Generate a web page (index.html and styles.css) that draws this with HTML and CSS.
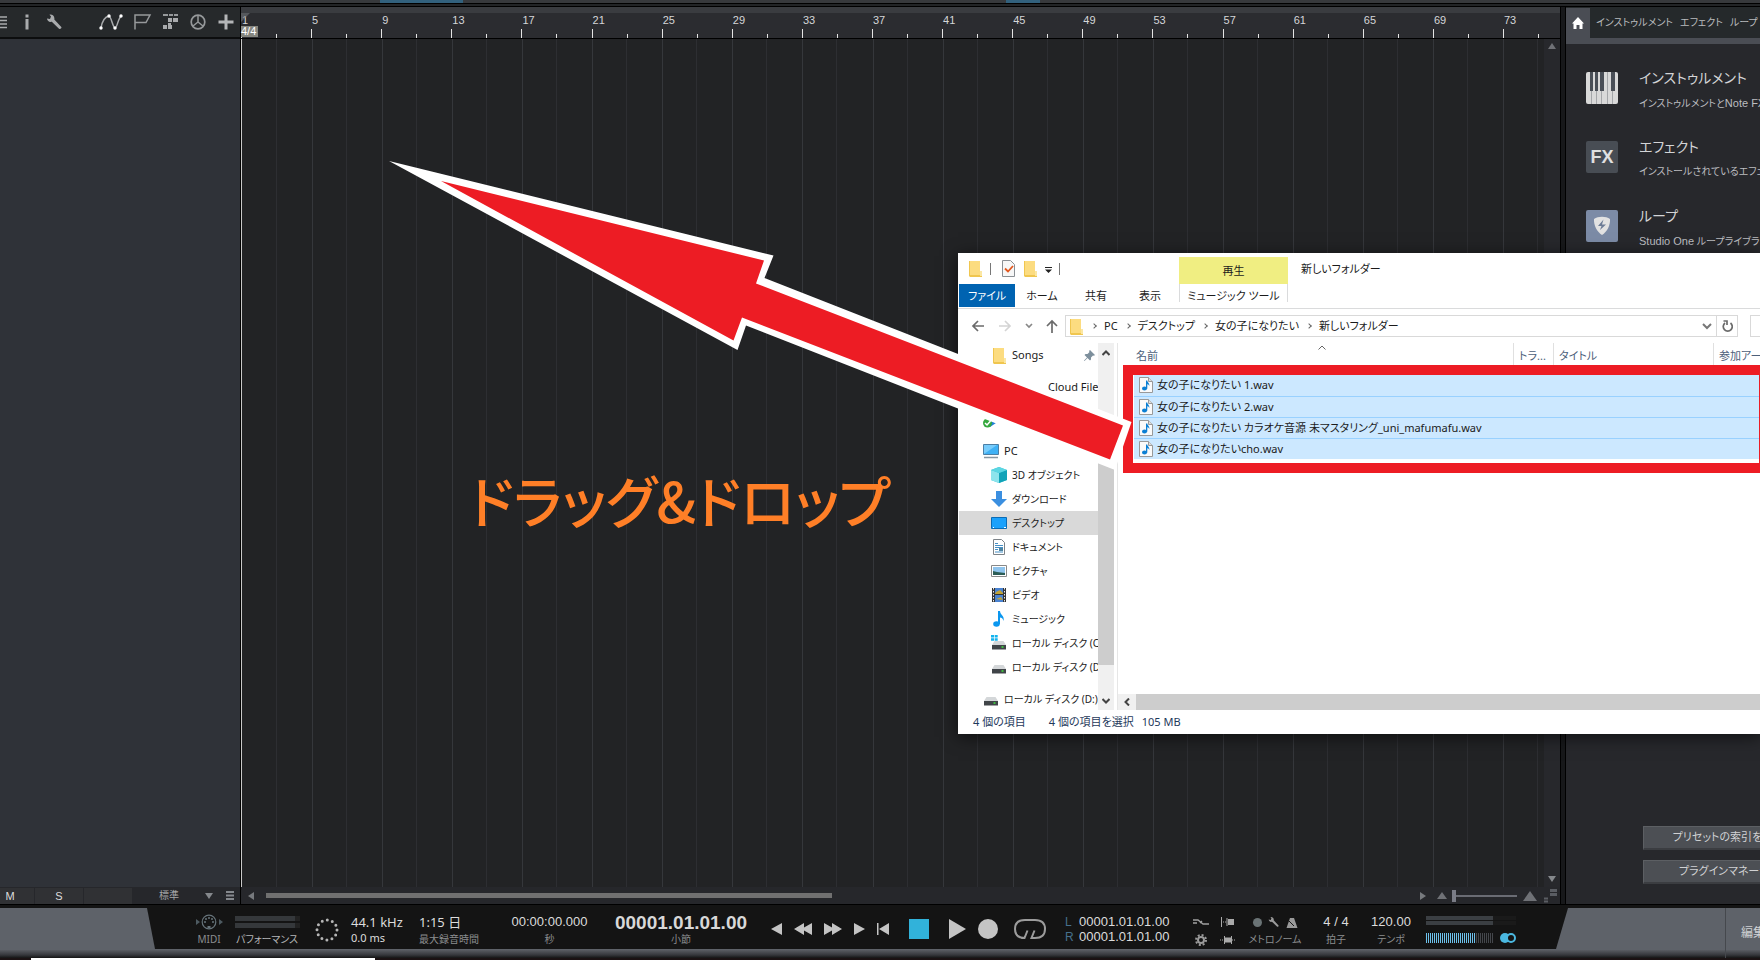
FILE: index.html
```html
<!DOCTYPE html>
<html lang="ja">
<head>
<meta charset="utf-8">
<title>Studio One</title>
<link rel="stylesheet" href="styles.css">
</head>
<body>
<svg class="defs" aria-hidden="true">
  <symbol id="folder" viewBox="0 0 14 17"><path d="M0 1h11v12h2v4H1l-1-1z" fill="#f0c64f"/><path d="M1 1h10v14H1z" fill="#fcdc80"/><path d="M11 11h2v5h-2z" fill="#fbe7a4"/></symbol>
  <symbol id="wav" viewBox="0 0 14 16"><path d="M.5.5h9l4 4v11H.5z" fill="#fafafa" stroke="#999"/><path d="M9.500.5v4h4" fill="#ddd" stroke="#999"/><ellipse cx="5.500" cy="11.500" rx="2.500" ry="2" fill="#0a7fd4"/><path d="M7 3.500h1.300c0 2 2.600 2.500 2 5.500-.5-1.500-1.500-1.800-2-1.800v4.500H7z" fill="#0a7fd4"/></symbol>
  <symbol id="drive" viewBox="0 0 16 16"><path d="M3.500 6h9l2.500 4H1z" fill="#d4d7d9"/><path d="M1 10h14v4.500H1z" fill="#404448"/><path d="M10.500 12h2" stroke="#3fe23f" stroke-width="1.500"/></symbol>
  <symbol id="wrench" viewBox="0 0 16 16"><path d="M1 4.500 4 5l1-2.500L3.500.7C6 0 9 2 8.300 5.500l7 7.500c.8 1.200-1.300 2.800-2.300 1.700L5.800 7.800C3 8.500 1 6.500 1 4.500z" fill="currentColor"/></symbol>
</svg>

<div class="app">
  <div class="topstrip"></div>
  <main class="workspace">
    <section class="tracks">
      <div class="toolbar">
        <button aria-label="リスト" class="t-list"><svg width="8" height="14" viewBox="0 0 8 14"><path d="M0 2h7M0 5.500h7M0 9h7M0 12.500h7" stroke="#a9abad" stroke-width="1.500"/></svg></button>
        <button aria-label="情報" class="t-info"><svg width="4" height="16" viewBox="0 0 4 16"><path d="M.5.5h3v3h-3zM.5 5h3v10.500h-3z" fill="#a9abad"/></svg></button>
        <button aria-label="ツール" class="t-tool"><svg width="16" height="16"><use href="#wrench"/></svg></button>
        <button aria-label="オートメーション" class="t-auto"><svg width="24" height="18" viewBox="0 0 24 18"><path d="M2 15C3 9 5 4 10 3c2 0 4 12 6 12s3-9 6-12" fill="none" stroke="#a9abad" stroke-width="1.500"/><g fill="#fff"><circle cx="2" cy="15" r="1.700"/><circle cx="10" cy="3" r="1.700"/><circle cx="16" cy="15" r="1.700"/><circle cx="22" cy="3" r="1.700"/></g></svg></button>
        <button aria-label="マーカー" class="t-flag"><svg width="18" height="16" viewBox="0 0 18 16"><path d="M1 15.500V1h15l-4 7.500H1" fill="none" stroke="#96999b" stroke-width="1.500"/></svg></button>
        <button aria-label="アレンジ" class="t-arr"><svg width="16" height="16" viewBox="0 0 16 16"><path d="M0 1h5M6 1h4M11 1h4" stroke="#96999b" stroke-width="2"/><path d="M5 4h4v4H5zM10 4h5v4h-5zM5 9h3v3H5zM0 11h4v4H0zM5 11h4v4H5z" fill="#a9abad"/></svg></button>
        <button aria-label="テンポ" class="t-tempo"><svg width="16" height="16" viewBox="0 0 16 16"><circle cx="8" cy="8" r="6.800" fill="none" stroke="#96999b" stroke-width="1.700"/><path d="M8 1v7M8 8l5 4M8 8l-5 4" stroke="#96999b" stroke-width="1.500"/></svg></button>
        <button aria-label="追加" class="t-add"><svg width="16" height="16" viewBox="0 0 16 16"><path d="M8 .5v15M.5 8h15" stroke="#b4b6b8" stroke-width="3"/></svg></button>
      </div>
      <div class="tracklist"></div>
      <div class="trackfoot">
        <button>M</button><button>S</button><span class="cell"></span>
        <button class="size">標準<i class="tri down"></i></button>
        <svg class="lines" width="8" height="9" viewBox="0 0 8 9"><path d="M0 1h8M0 4.500h8M0 8h8" stroke="#85888d" stroke-width="2"/></svg>
      </div>
    </section>

    <section class="arrange">
      <div class="ruler">
        <span>1</span><span>5</span><span>9</span><span>13</span><span>17</span><span>21</span><span>25</span><span>29</span><span>33</span><span>37</span><span>41</span><span>45</span><span>49</span><span>53</span><span>57</span><span>61</span><span>65</span><span>69</span><span>73</span>
        <svg class="playhead" width="9" height="9" viewBox="0 0 9 9"><path d="M0 0h9L0 9z" fill="#74777c"/></svg>
        <b class="meter-sig">4/4</b>
      </div>
      <div class="lanes">
        <div class="grid"><i></i><i></i><i></i><i></i><i></i><i></i><i></i><i></i><i></i><i></i><i></i><i></i><i></i><i></i><i></i><i></i><i></i><i></i><i></i></div>
        <div class="vscroll"><i class="tri up"></i><i class="tri down"></i></div>
      </div>
      <div class="hscroll">
        <i class="tri left"></i>
        <div class="rail"><div class="thumb"></div></div>
        <i class="tri right"></i>
        <i class="tri up zoomout"></i>
        <input type="range" aria-label="ズーム" min="0" max="100" value="0">
        <i class="tri up big"></i>
        <svg width="14" height="14" viewBox="0 0 14 14"><path d="M6 1.500h7M6 5.500h7" stroke="#5a5d63" stroke-width="3"/><path d="M0 9.500h4M0 12.500h4" stroke="#5a5d63" stroke-width="2"/></svg>
      </div>
    </section>

    <aside class="browser">
      <nav class="tabs">
        <button class="home" aria-label="ホーム"><svg width="12" height="12" viewBox="0 0 12 12"><path d="M6 0l6 6.500h-1.500V12h-3V8h-3v4h-3V6.500H0z" fill="#fff"/></svg></button>
        <button>インストゥルメント</button><button>エフェクト</button><button>ループ</button>
      </nav>
      <ul class="cats">
        <li>
          <svg width="32" height="32" viewBox="0 0 32 32"><rect width="32" height="32" rx="2" fill="#d9d9d9"/><path d="M5.500 19v13M10.500 19v13M15.500 19v13M21.500 0v32M26.500 19v13" stroke="#a4a6a9"/><path d="M4 0h3v19H4zM9 0h3v19H9zM14 0h4v19h-4zM25 0h4v19h-4z" fill="#4a4f57"/></svg>
          <div><h3>インストゥルメント</h3><p>インストゥルメントと<span>Note FX</span>を</p></div>
        </li>
        <li>
          <span class="fx">FX</span>
          <div><h3>エフェクト</h3><p>インストールされているエフェクト</p></div>
        </li>
        <li>
          <svg width="32" height="32" viewBox="0 0 32 32"><rect width="32" height="32" rx="2" fill="#7c8ba6"/><path d="M8 9c4-3 12-3 16 0 .5 6-3 13-8 16C11 22 7.500 15 8 9z" fill="#e2e2e2"/><path d="M17.500 9.500 12 16h3.500l-1.500 4 6-5.500h-4z" fill="#6d7c96"/></svg>
          <div><h3>ループ</h3><p><span>Studio One</span> ループライブラリ</p></div>
        </li>
      </ul>
      <div class="actions">
        <button>プリセットの索引を再作成</button>
        <button>プラグインマネージャー</button>
      </div>
    </aside>
  </main>

  <footer class="dock">
    <div class="transport">
      <div class="g"><svg width="28" height="16" viewBox="0 0 28 16"><circle cx="14" cy="8" r="6.800" fill="none" stroke="#66737a" stroke-width="1.200"/><g fill="#66737a"><circle cx="10" cy="8" r="1"/><circle cx="18" cy="8" r="1"/><circle cx="11" cy="5" r="1"/><circle cx="17" cy="5" r="1"/><circle cx="14" cy="4" r="1"/><rect x="12.500" y="12" width="3" height="2"/></g><path d="M1 5l4 3-4 3zM24 5l4 3-4 3z" fill="#4d5a61"/></svg><small>MIDI</small></div>
      <div class="g"><div class="perf"><i></i><i></i></div><small class="lit">パフォーマンス</small></div>
      <div class="g spin"><svg width="24" height="24" viewBox="0 0 24 24"><circle cx="12" cy="12" r="10" fill="none" stroke="#b5b5b5" stroke-width="3" stroke-linecap="round" stroke-dasharray="0 5.236"/></svg></div>
      <div class="g l"><span class="seg">44.1 kHz</span><span class="seg2">0.0 ms</span></div>
      <div class="g l"><span class="seg">1:15 日</span><small>最大録音時間</small></div>
      <div class="g"><span class="num">00:00:00.000</span><small>秒</small></div>
      <div class="g"><span class="bignum">00001.01.01.00</span><small>小節</small></div>
      <div class="keys">
        <button aria-label="前へ"><svg width="11" height="12" viewBox="0 0 11 12"><path d="M11 0v12L0 6z"/></svg></button>
        <button aria-label="巻き戻し"><svg width="18" height="12" viewBox="0 0 18 12"><path d="M10 0v4.500L18 0v12l-8-4.500V12L0 6z"/></svg></button>
        <button aria-label="早送り"><svg width="18" height="12" viewBox="0 0 18 12"><path d="M8 0v4.500L0 0v12l8-4.500V12l10-6z"/></svg></button>
        <button aria-label="次へ"><svg width="11" height="12" viewBox="0 0 11 12"><path d="M0 0v12l11-6z"/></svg></button>
        <button aria-label="先頭へ"><svg width="12" height="12" viewBox="0 0 12 12"><path d="M0 0h1.500v12H0zM12 0v12L2 6z"/></svg></button>
        <button aria-label="停止" class="wide"><svg width="20" height="20" viewBox="0 0 20 20"><path d="M0 0h20v20H0z" fill="#31b2da"/></svg></button>
        <button aria-label="再生" class="wide"><svg width="17" height="20" viewBox="0 0 17 20"><path d="M0 0v20l17-10z"/></svg></button>
        <button aria-label="録音"><svg width="20" height="20" viewBox="0 0 20 20"><circle cx="10" cy="10" r="10"/></svg></button>
        <button aria-label="ループ" class="loop"><svg width="32" height="20" viewBox="0 0 32 20"><path d="M11 19C4 19 1 16 1 10S4 1 11 1h10c7 0 10 3 10 9s-3 9-10 9h-3.500l3-7.500M7 19h3.500l3-7.500" fill="none" stroke="#9c9c9c" stroke-width="2"/></svg></button>
      </div>
      <div class="loc"><b>L</b><span class="num">00001.01.01.00</span><b>R</b><span class="num">00001.01.01.00</span></div>
      <div class="tools">
        <svg width="16" height="8" viewBox="0 0 16 8"><path d="M0 2h5l5 4h6M0 5h4M9 3l-2 2" fill="none" stroke="#a0a0a0" stroke-width="1.300"/></svg>
        <svg width="16" height="10" viewBox="0 0 16 10"><path d="M1.500 0v10" stroke="#aaa"/><path d="M3 5h4" stroke="#aaa" stroke-dasharray="1 1"/><path d="M7 1v8M8 5h6" stroke="#aaa"/><path d="M8 2h6v6H8z" fill="#aaa"/></svg>
        <svg width="12" height="12" viewBox="0 0 12 12"><circle cx="6" cy="6" r="3" fill="none" stroke="#9a9a9a" stroke-width="2"/><circle cx="6" cy="6" r="5" fill="none" stroke="#9a9a9a" stroke-width="2" stroke-dasharray="2 1.927"/></svg>
        <svg width="16" height="10" viewBox="0 0 16 10"><path d="M0 5h4M12 5h4" stroke="#aaa" stroke-dasharray="1 1"/><path d="M4.500 1v8M11.500 1v8" stroke="#aaa"/><path d="M5 2.500h6v5H5z" fill="#aaa"/></svg>
      </div>
      <div class="g"><div class="metro"><i></i><svg width="11" height="12" viewBox="0 0 16 16"><use href="#wrench"/></svg><svg width="12" height="11" viewBox="0 0 12 11"><path d="M4 1h4l3.500 10H.5z" fill="#9a9a9a"/><path d="M1 2l7 7" stroke="#151515"/></svg></div><small>メトロノーム</small></div>
      <div class="g"><span class="num">4 / 4</span><small>拍子</small></div>
      <div class="g"><span class="num">120.00</span><small>テンポ</small></div>
      <div class="out"><div class="bars"><i></i><i></i></div><div class="vol"><i></i><svg width="16" height="10" viewBox="0 0 16 10"><circle cx="5" cy="5" r="5" fill="#4bb8e0"/><circle cx="11" cy="5" r="4" fill="#151515" stroke="#4bb8e0" stroke-width="2"/></svg></div></div>
    </div>
    <button class="edit">編集</button>
  </footer>
  <div class="bottomstrip"><i></i></div>
</div>

<p class="caption">ドラッグ&amp;ドロップ</p>

<section class="explorer">
  <header class="ribbon">
    <div class="quick">
      <svg width="14" height="17"><use href="#folder"/></svg><i class="sep"></i>
      <svg width="13" height="17" viewBox="0 0 13 17"><path d="M.5.500h8l4 4v12H.5z" fill="#f7f7f7" stroke="#8a8f94"/><path d="M3 8.500l3 3 5-5.500" fill="none" stroke="#e2571e" stroke-width="1.800"/></svg>
      <svg width="14" height="17"><use href="#folder"/></svg>
      <svg class="drop" width="7" height="6" viewBox="0 0 7 6"><path d="M0 0h7v1H0zM0 2.500h7L3.500 6z" fill="#222"/></svg><i class="sep"></i>
    </div>
    <div class="ctx">再生</div>
    <h2>新しいフォルダー</h2>
    <nav class="rtabs">
      <button class="file">ファイル</button><button>ホーム</button><button>共有</button><button>表示</button><button class="music">ミュージック ツール</button>
    </nav>
  </header>
  <div class="addr">
    <div class="arrows">
      <svg width="14" height="12" viewBox="0 0 14 12"><path d="M7 1 2 6l5 5M2 6h11" fill="none" stroke="#6b6b6b" stroke-width="1.700"/></svg>
      <svg width="14" height="12" viewBox="0 0 14 12"><path d="M7 1l5 5-5 5M12 6H1" fill="none" stroke="#d4d4d4" stroke-width="1.700"/></svg>
      <svg width="8" height="6" viewBox="0 0 8 6"><path d="M1 1l3 3 3-3" fill="none" stroke="#888" stroke-width="1.700"/></svg>
      <svg width="12" height="14" viewBox="0 0 12 14"><path d="M1 7l5-5 5 5M6 2v12" fill="none" stroke="#6b6b6b" stroke-width="1.700"/></svg>
    </div>
    <div class="path">
      <svg width="14" height="17"><use href="#folder"/></svg>
      <i class="chev"></i><span>PC</span><i class="chev"></i><span>デスクトップ</span><i class="chev"></i><span>女の子になりたい</span><i class="chev"></i><span>新しいフォルダー</span>
      <svg class="end" width="10" height="7" viewBox="0 0 10 7"><path d="M1 1l4 4 4-4" fill="none" stroke="#777" stroke-width="2"/></svg>
      <button aria-label="更新"><svg width="11" height="12" viewBox="0 0 11 12"><path d="M8.500 3a4.500 4.500 0 1 1-5.500 0M1.500 1h3.500v4" fill="none" stroke="#6b6b6b" stroke-width="1.700"/></svg></button>
    </div>
    <div class="search"></div>
  </div>
  <div class="panes">
    <ul class="tree">
      <li class="sub first"><svg width="14" height="17"><use href="#folder"/></svg>Songs<svg class="pin" width="11" height="11" viewBox="0 0 11 11"><path d="M6 0l5 5-1 .8-1-.3-2 2v2L6 10.500 3.500 8 .5 11 0 10.500 3 7.500.5 5l1-1h2l2-2L5 1z" fill="#7d8f9c"/></svg></li>
      <li class="cloud">Cloud Files</li>
      <li class="sync"><svg width="13" height="10" viewBox="0 0 13 10"><path d="M5 1l8 4-6 4z" fill="#1f7fd6"/><circle cx="4.500" cy="5" r="4.500" fill="#35a83e"/><path d="M2 5l2 2 3.500-4" fill="none" stroke="#fff" stroke-width="1.500"/></svg></li>
      <li class="pc"><svg width="16" height="16" viewBox="0 0 16 16"><path d="M.5 1.500h15v10H.5z" fill="#3fb1f5" stroke="#4c7fa5"/><path d="M1 11 14 2H1z" fill="#78ccfb"/><path d="M1 14.500h14" stroke="#8797a3" stroke-width="1.500"/></svg>PC</li>
      <li class="sub"><svg width="16" height="16" viewBox="0 0 16 16"><path d="M8 0l8 3v10l-8 3-8-3V3z" fill="#2ec4d6"/><path d="M0 3l8 3v10l-8-3z" fill="#8de4ec"/><path d="M8 6l8-3v10l-8 3z" fill="#11a3b8"/><path d="M8 0l8 3-8 3-8-3z" fill="#5cd6e2"/></svg>3D オブジェクト</li>
      <li class="sub"><svg width="16" height="16" viewBox="0 0 16 16"><path d="M5 0h6v8h5l-8 8-8-8h5z" fill="#3b8fe0"/></svg>ダウンロード</li>
      <li class="sub on"><svg width="16" height="16" viewBox="0 0 16 16"><path d="M.5 2.500h15v11H.5z" fill="#1ba1fb" stroke="#0c6cb5"/><path d="M2 12.500h1M13 12.500h2" stroke="#fff"/></svg>デスクトップ</li>
      <li class="sub"><svg width="16" height="16" viewBox="0 0 16 16"><path d="M2.500.5h8l3 3v12h-11z" fill="#fff" stroke="#7d8388"/><path d="M4 4.500h3M4 6.500h8M4 8.500h8M4 10.500h3M4 13h8" stroke="#4790c6"/><path d="M8 9h4v3H8z" fill="#4e83a0"/></svg>ドキュメント</li>
      <li class="sub"><svg width="16" height="16" viewBox="0 0 16 16"><path d="M.5 2.500h15v11H.5z" fill="#fff" stroke="#888"/><path d="M2 4h12v8H2z" fill="#8fc4ed"/><path d="M2 8l4 1 8 1v2H2z" fill="#2c5d56"/></svg>ピクチャ</li>
      <li class="sub"><svg width="16" height="16" viewBox="0 0 16 16"><path d="M1 1h14v14H1z" fill="#333"/><path d="M4 1h8v6H4zM4 8h8v7H4z" fill="#4a83d1"/><path d="M5 5l4-2 3 3v1H4zM5 12l5-2 2 3z" fill="#c2a334"/><path d="M2.500 1v14M13.500 1v14" stroke="#eee" stroke-dasharray="1.500 1.500"/></svg>ビデオ</li>
      <li class="sub"><svg width="16" height="16" viewBox="0 0 16 16"><ellipse cx="5.500" cy="13" rx="3.300" ry="2.700" fill="#0b97ef"/><path d="M7 0h2c0 4 5 4.500 3.500 10C12 7.500 10.500 6.500 9 6.500V13H7z" fill="#0b97ef"/></svg>ミュージック</li>
      <li class="sub"><svg width="16" height="16" viewBox="0 0 16 16"><use href="#drive"/><path d="M0 0h3v2.500H0zM3.700 0h3v2.500h-3zM0 3.200h3v2.500H0zM3.700 3.200h3v2.500h-3z" fill="#13b3ee"/></svg>ローカル ディスク (C:)</li>
      <li class="sub"><svg width="16" height="16"><use href="#drive"/></svg>ローカル ディスク (D:)</li>
      <li class="last"><svg width="16" height="16"><use href="#drive"/></svg>ローカル ディスク (D:)</li>
    </ul>
    <div class="vbar"><svg width="8" height="6" viewBox="0 0 8 6"><path d="M.5 5 4 1.500 7.500 5" fill="none" stroke="#444" stroke-width="2"/></svg><div class="thumb"></div><svg width="8" height="6" viewBox="0 0 8 6"><path d="M.5 1 4 4.500 7.500 1" fill="none" stroke="#444" stroke-width="2"/></svg></div>
    <div class="files">
      <table>
        <thead><tr><th>名前</th><th class="c2">トラ...</th><th class="c3">タイトル</th><th class="c4">参加アーティスト</th></tr></thead>
        <tbody>
          <tr><td colspan="4"><svg width="14" height="16"><use href="#wav"/></svg>女の子になりたい 1.wav</td></tr>
          <tr><td colspan="4"><svg width="14" height="16"><use href="#wav"/></svg>女の子になりたい 2.wav</td></tr>
          <tr><td colspan="4"><svg width="14" height="16"><use href="#wav"/></svg>女の子になりたい カラオケ音源 未マスタリング_uni_mafumafu.wav</td></tr>
          <tr><td colspan="4"><svg width="14" height="16"><use href="#wav"/></svg>女の子になりたいcho.wav</td></tr>
        </tbody>
      </table>
      <svg class="sort" width="8" height="5" viewBox="0 0 8 5"><path d="M.5 4.500 4 1l3.500 3.500" fill="none" stroke="#666"/></svg>
      <div class="frame"></div>
      <div class="hbar"><svg width="6" height="8" viewBox="0 0 6 8"><path d="M5 .5 1.500 4 5 7.500" fill="none" stroke="#444" stroke-width="2"/></svg><div class="thumb"></div></div>
    </div>
  </div>
  <footer class="status"><span>4 個の項目</span><span>4 個の項目を選択</span><span class="mb">105 MB</span></footer>
</section>

<svg class="arrow" width="1140" height="480" viewBox="0 0 1140 480" aria-hidden="true">
  <path d="M389 161 773.500 255.500 764.500 278 1131.500 422 1115 470 746 325.500 737.500 350z" fill="#fff"/>
  <path d="M441 181 764 260.500 756 283.500 1123 425.500 1110 459.500 742 317.500 733.500 340.500z" fill="#ed1c24"/>
</svg>
</body>
</html>
```
FILE: styles.css
```css
* { box-sizing: border-box; font-feature-settings: "palt" !important; }
body {
  margin: 0;
  position: relative;
  overflow: hidden;
  background: #141414;
  font: 12px/16px "Liberation Sans", "Noto Sans CJK JP", sans-serif;
  color: #d5d6d8;
}
button { border: 0; padding: 0; margin: 0; background: none; color: inherit; font: inherit; white-space: nowrap; }
svg { display: block; flex: none; }
ul { list-style: none; margin: 0; padding: 0; }
h2, h3, p { margin: 0; font-weight: 400; }
.defs { position: absolute; width: 0; height: 0; }

.app { height: 100vh; display: flex; flex-direction: column; }
.topstrip {
  height: 7px;
  flex: none;
  background: linear-gradient(90deg, transparent 380px, #32617d 380px 463px, transparent 463px 1006px, #32617d 1006px 1040px, transparent 1040px) 0 0 / 100% 3px no-repeat,
    linear-gradient(#37393c 3px, #000 3px 4px, #222426 4px 6px, #000 6px);
}
.workspace { flex: 1; min-height: 0; display: grid; grid-template-columns: 241px minmax(0, 1fr) 195px; background: #17181a; border-bottom: 1px solid #000; }

.tri { display: block; width: 0; height: 0; border: 4px solid transparent; flex: none; }
.tri.up { border-bottom: 6px solid #6f7176; border-top: 0; }
.tri.down { border-top: 6px solid #85888c; border-bottom: 0; }
.tri.left { border-right: 6px solid #777a7e; border-left: 0; }
.tri.right { border-left: 6px solid #777a7e; border-right: 0; }
.tri.big { border-width: 0 7px 10px; }

.tracks { display: flex; flex-direction: column; border-right: 1px solid #000; }
.toolbar { height: 32px; display: flex; align-items: center; color: #a9abad; background: #26292b; border-bottom: 2px solid #0c0d0e; }
.t-info { margin-left: 17px; }
.t-tool { margin-left: 17px; }
.t-auto { margin-left: 37px; }
.t-flag { margin-left: 11px; }
.t-arr { margin-left: 11px; }
.t-tempo { margin-left: 11px; }
.t-add { margin-left: 12px; }
.tracklist { flex: 1; background: #2f3238; }
.trackfoot { height: 17px; display: flex; align-items: center; background: #26272b; gap: 1px; }
.trackfoot > button:not(.size), .trackfoot .cell { width: 48px; height: 16px; background: #303134; color: #ddd; font-size: 11px; }
.trackfoot > button:first-child { width: 34px; padding-right: 14px; }
.trackfoot .size { display: flex; align-items: center; justify-content: space-between; margin-left: 26px; width: 54px; font-size: 10px; color: #a5a6a8; }
.lines { margin-left: 12px; }

.arrange { display: flex; flex-direction: column; min-width: 0; border-right: 1px solid #000; background: #242528; margin-right: 4px; }
.ruler, .grid { display: grid; grid-template-columns: repeat(18, 1fr) 41px; }
.ruler {
  position: relative;
  height: 32px;
  padding-right: 16px;
  background: linear-gradient(#3a3c40 6px, #2b2c30 6px);
  border-bottom: 1px solid #000;
}
.ruler span {
  padding: 5px 0 0 1px;
  font-size: 11px;
  white-space: nowrap;
  background: linear-gradient(#e4e4e4, #e4e4e4) 0 100% / 1px 9px no-repeat, linear-gradient(#e4e4e4, #e4e4e4) 35px 100% / 1px 4px no-repeat;
}
.playhead { position: absolute; left: 0; top: 6px; opacity: .6; }
.meter-sig { position: absolute; left: 0; top: 19px; width: 17px; background: #85867f; color: #fff; font: 11px/11px "Liberation Sans", sans-serif; }
.lanes { flex: 1; min-height: 0; display: flex; }
.grid { flex: 1; background: #222325; border-left: 1px solid #c9c9c9; }
.grid i { background: linear-gradient(#35373b, #35373b) 0 0 / 1px 100% no-repeat, linear-gradient(#2d2e32, #2d2e32) 34px 0 / 1px 100% no-repeat; }
.grid i:first-child { background-size: 0 0, 1px 100%; }
.vscroll { width: 16px; display: flex; flex-direction: column; justify-content: space-between; align-items: center; padding: 4px 0 5px; background: #27282c; }
.hscroll { height: 17px; display: flex; align-items: center; padding: 0 2px 0 7px; background: #26272b; }
.rail { flex: 1; margin: 0 23px 0 12px; }
.rail .thumb { width: 50%; height: 5px; background: #707070; }
.zoomout { margin-left: 11px; margin-right: 5px; border-width: 0 5px 7px !important; }
.hscroll input { appearance: none; width: 65px; height: 12px; margin: 0 6px 0 0; background: linear-gradient(#6a6c74, #6a6c74) 0 50% / 100% 2px no-repeat; }
.hscroll input::-webkit-slider-thumb { appearance: none; width: 4px; height: 12px; background: #7a7c86; }
.hscroll .big { margin-right: 7px; }

.browser { display: flex; flex-direction: column; min-width: 0; overflow: hidden; border-left: 1px solid #000; background: #27282c; white-space: nowrap; }
.tabs { height: 37px; flex: none; display: flex; background: #25292b; border-bottom: 6px solid #4a4d54; padding-top: 1px; color: #b9bbbd; font-size: 10px; }
.tabs button { flex: none; margin-right: 7px; padding-bottom: 1px; }
.tabs .home { width: 24px; margin-right: 6px; background: #4a4d54; display: grid; place-items: center; }
.cats { flex: 1; padding: 22px 0 0 20px; }
.cats li { display: flex; gap: 21px; height: 69px; }
.cats li > svg, .fx { margin-top: 6px; }
.fx { flex: none; width: 32px; height: 32px; border-radius: 2px; background: #484d54; color: #e0e0e0; font: bold 18px/32px "Liberation Sans", sans-serif; text-align: center; }
.cats h3 { font-size: 14px; line-height: 24px; color: #d3d4d6; }
.cats p { margin-top: 4px; font-size: 10px; line-height: 18px; color: #bcbdc0; }
.cats p span { font-size: 11px; }
.actions { padding: 0 0 20px 77px; display: grid; gap: 10px; }
.actions button { height: 24px; width: 182px; padding-bottom: 2px; background: #4c4f54; border: 1px solid #5c5f63; border-bottom: 2px solid #3b3d41; color: #d0d1d3; text-align: center; font-size: 11px; }

.dock { height: 50px; margin-top: 3px; flex: none; display: flex; background: linear-gradient(#5e6269 42px, #595c62 42px, #35373b 47px, #141414); }
.transport {
  flex: 1;
  height: 41px;
  margin: 0 0 0 147px;
  padding-left: 41px;
  clip-path: polygon(0 0, 100% 0, calc(100% - 12px) 100%, 8px 100%);
  background: #141414;
  display: grid;
  grid-template-columns: 42px 74px 46px 68px 83px 97px 166px 292px 128px 60px 62px 60px 50px 1fr;
}
.edit { width: 192px; padding-left: 173px; overflow: hidden; color: #cfd1d3; text-align: left; background: linear-gradient(#45484d, #45484d) 157px 0 / 1px 100% no-repeat; }
.g { display: flex; flex-direction: column; align-items: center; padding-top: 6px; white-space: nowrap; }
.g > :first-child { height: 16px; }
.g.l { align-items: flex-start; padding-left: 1px; }
.g small { margin-top: 2px; line-height: 14px; font-size: 10px; color: #8b8d8f; font-family: "Noto Sans", "Noto Sans CJK JP", sans-serif; }
.g small.lit { color: #b5b6b8; }
.seg { font: 13px/16px "Noto Sans", "Noto Sans CJK JP", sans-serif; color: #dcdcdc; }
.seg2 { font: 11px/14px "Noto Sans", sans-serif; margin-top: 1px; color: #dcdcdc; }
.num { font-size: 13px; color: #dcdcdc; }
.bignum { font: bold 19px/18px "Liberation Sans", sans-serif; color: #d8d8d8; }
.perf { width: 65px; padding-top: 2px; display: grid; gap: 2px; align-content: start; }
.perf i { height: 5px; background: linear-gradient(90deg, #35383b 60px, #222 60px); }
.g.spin { padding-top: 10px; }
.g.spin > svg { height: 24px; }
.keys { display: flex; align-items: center; gap: 12px; padding-left: 7px; fill: #c4c4c4; }
.keys .wide { margin-left: 8px; }
.keys .loop { margin-left: 4px; }
.loc { display: grid; grid-template-columns: 14px 1fr; grid-auto-rows: 15px; padding: 6px 0 0 9px; line-height: 16px; }
.loc b { font-weight: 400; color: #46708e; }
.tools { display: grid; grid-template-columns: 16px 16px; gap: 6px 11px; padding: 8px 0 0 9px; grid-auto-rows: 12px; align-items: center; justify-items: center; }
.metro { display: flex; align-items: center; justify-content: space-between; width: 45px; color: #9a9a9a; }
.metro i { width: 9px; height: 9px; border-radius: 50%; background: #6a7375; }
.out { padding: 8px 0 0 10px; }
.bars { display: grid; gap: 1px; width: 90px; }
.bars i { height: 4px; background: linear-gradient(90deg, #3b3f43 67px, #1a1a1a 67px); }
.vol { display: flex; gap: 7px; margin-top: 8px; }
.vol i { width: 67px; height: 10px; background: repeating-linear-gradient(90deg, transparent 0 1px, #141414 1px 2px), linear-gradient(90deg, #6dc0ea 50px, #44474c 50px); }
.bottomstrip { height: 2px; flex: none; background: #1b1213; }
.bottomstrip i { display: block; width: 344px; height: 2px; margin-left: 31px; background: #fff; }

.caption { position: absolute; left: 469px; top: 459px; color: #ff7f27; font: 500 56px/80px "Noto Sans CJK JP", sans-serif; white-space: nowrap; }
.arrow { position: absolute; left: 0; top: 0; }

.explorer {
  position: absolute;
  left: 958px;
  right: 0;
  top: 253px;
  display: flex;
  flex-direction: column;
  overflow: hidden;
  background: #fff;
  box-shadow: 0 3px 16px rgba(0, 0, 0, .6);
  color: #1b1b1b;
  font: 11px/16px "Noto Sans", "Noto Sans CJK JP", sans-serif;
  white-space: nowrap;
}
.ribbon { display: grid; grid-template-columns: 221px 109px 1fr; grid-template-rows: 31px 24px; border-bottom: 1px solid #dadbdc; }
.quick { display: flex; align-items: center; padding-left: 11px; gap: 7px; }
.quick .sep { width: 1px; height: 12px; background: #777; }
.quick .sep + svg { margin-left: 4px; }
.quick svg + svg { margin-left: 2px; }
.quick .drop { margin-left: 0; margin-top: 3px; }
.ctx { margin-top: 4px; background: #f0ee82; display: grid; place-items: center; }
.ribbon h2 { font-size: 11px; line-height: 32px; padding-left: 13px; }
.rtabs { grid-column: 1 / -1; display: flex; padding-left: 1px; }
.rtabs button { width: 54px; height: 23px; }
.rtabs .file { width: 56px; background: #0063b1; color: #fff; }
.rtabs .music { width: 109px; height: 18px; margin-left: 2px; padding-top: 4px; border: solid #dadbdc; border-width: 0 1px; }
.addr { display: flex; padding-top: 6px; height: 34px; }
.arrows { width: 107px; display: flex; align-items: center; justify-content: space-between; padding: 0 7px 6px 13px; }
.path { flex: 1; display: flex; align-items: center; height: 22px; border: 1px solid #d9d9d9; padding-left: 4px; gap: 8px; }
.chev { width: 4px; height: 4px; border: solid #666; border-width: 1px 1px 0 0; transform: rotate(45deg); }
.path .end { margin-left: auto; margin-right: -4px; }
.path button { width: 21px; height: 100%; border-left: 1px solid #d9d9d9; display: grid; place-items: center; }
.search { width: 10px; height: 22px; margin-left: 12px; border: 1px solid #d9d9d9; border-right: 0; }
.panes { display: flex; }
.tree { width: 140px; height: 367px; overflow: hidden; padding-left: 1px; font-size: 10px; }
.tree li { display: flex; align-items: center; gap: 5px; height: 24px; padding-left: 24px; }
.tree .first, .tree .cloud, .tree .pc { font-size: 11px; }
.tree .sub { padding-left: 32px; }
.tree .on { background: #d9d9d9; }
.tree .first { padding-left: 34px; }
.tree .pin { margin: 0 3px 0 auto; }
.tree .cloud { padding-left: 89px; height: 40px; }
.tree .sync { height: 32px; }
.tree .last { height: 40px; }
.vbar { width: 16px; display: flex; flex-direction: column; align-items: center; padding: 7px 0 6px; background: #f0f0f0; margin-right: 3px; }
.vbar .thumb { width: 16px; height: 226px; margin: 83px 0 auto; background: #cdcdcd; }
.files { flex: 1; min-width: 0; display: flex; flex-direction: column; position: relative; border-left: 1px solid #e6e6e6; overflow: hidden; }
table { border-collapse: collapse; table-layout: fixed; width: calc(100% - 16px); margin-left: 16px; }
th { height: 32px; padding: 0 0 6px 6px; text-align: left; font-weight: 400; color: #4c607a; overflow: hidden; }
th:first-child { padding-left: 2px; }
.c2, .c3, .c4 { background: linear-gradient(#e0e0e0, #e0e0e0) 0 0 / 1px 100% no-repeat; }
.c2 { width: 40px; }
.c3 { width: 160px; }
.c4 { width: 47px; }
td { height: 21px; padding: 0 0 0 5px; background: #cce8ff; border-bottom: 1px solid #99d1ff; }
tr:last-child td { border-bottom: 0; }
td svg { float: left; margin-right: 4px; }
.sort { position: absolute; left: 200px; top: 2px; }
.frame { position: absolute; left: 5px; right: 0; top: 22px; height: 108px; border: 10px solid #ed1c24; border-right-width: 1px; }
.hbar { margin-top: auto; height: 16px; display: flex; align-items: center; background: #f0f0f0; padding-left: 6px; }
.hbar .thumb { flex: 1; height: 16px; margin-left: 6px; background: #cdcdcd; }
.status { display: flex; height: 24px; align-items: center; padding: 0 0 0 15px; color: #1e395b; gap: 23px; }
.status .mb { margin-left: -15px; }
```
